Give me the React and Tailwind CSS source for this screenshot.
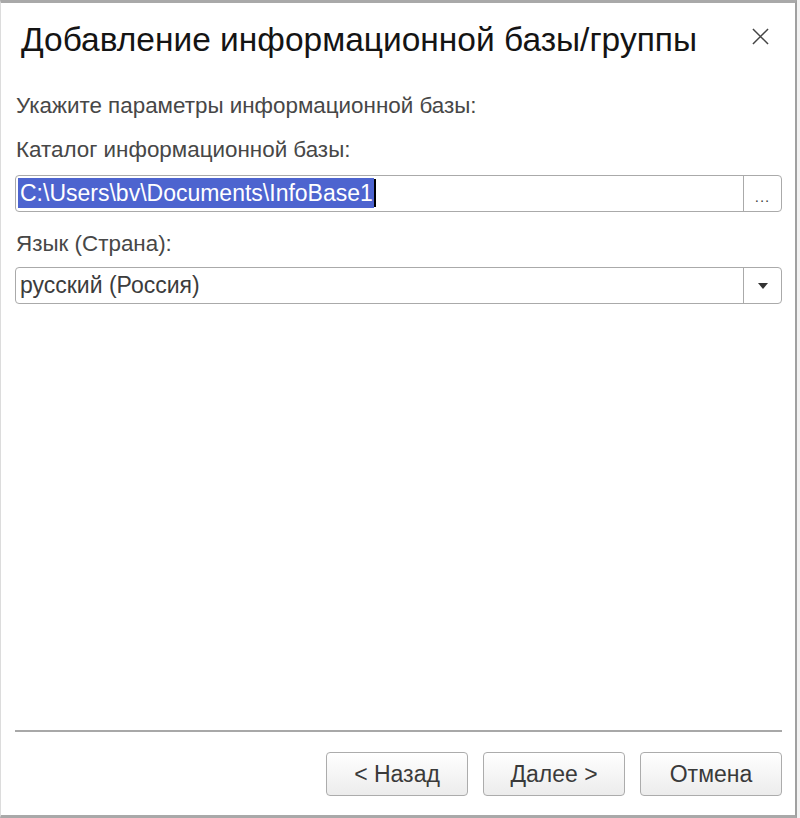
import React from 'react';

const Field = ({ children, button }) => (
  <div className="flex h-[37px] w-full rounded-[4px] border border-[#aaaaaa] bg-white">
    <div className="flex flex-1 items-center pl-[2px] overflow-hidden">{children}</div>
    <div className="flex w-[38px] items-center justify-center border-l border-[#aaaaaa]">{button}</div>
  </div>
);

const Btn = ({ label }) => (
  <button
    type="button"
    className="h-[44px] w-[142px] rounded-[4px] border border-[#acacac] bg-gradient-to-b from-white to-[#ececec] text-[23px] text-[#3a3a3a]"
  >
    {label}
  </button>
);

const App = () => {
  return (
    <div
      className="flex h-[818px] w-[800px] bg-[#f2f2f2]"
      style={{ fontFamily: '"Liberation Sans", Arial, sans-serif' }}
    >
      <div className="flex h-full w-[797px] flex-col border-t-[3px] border-b-[3px] border-r-2 border-l border-t-[#a9a9a9] border-b-[#a9a9a9] border-r-[#a0a0a0] border-l-[#dcdcdc] bg-white pl-[14px] pr-[13px]">
        <div className="flex h-[75px] items-center justify-between pl-[6px] pr-[13px] pb-[2px]">
          <h1 className="text-[33.5px] leading-none text-[#141414]">Добавление информационной базы/группы</h1>
          <svg width="17" height="17" viewBox="0 0 18 18" className="mb-[6px] text-[#444]">
            <path d="M1 1 L17 17 M17 1 L1 17" stroke="currentColor" strokeWidth="1.6" />
          </svg>
        </div>

        <div className="pl-[1px] pt-[17px] text-[22.4px] leading-none text-[#474747]">
          Укажите параметры информационной базы:
        </div>
        <div className="pl-[1px] pt-[22px] pb-[13px] text-[22.4px] leading-none text-[#474747]">
          Каталог информационной базы:
        </div>
        <Field button={<span className="pt-[6px] text-[15px] leading-none tracking-[1px] text-[#444]">...</span>}>
          <span className="flex h-[30px] items-center bg-[#4d64cf] pl-[2px] pr-[1px] text-[23px] text-white">
            C:\Users\bv\Documents\InfoBase1
          </span>
          <span className="h-[28px] w-[2px] bg-black" />
        </Field>
        <div className="pl-[1px] pt-[21px] pb-[12px] text-[22.4px] leading-none text-[#474747]">
          Язык (Страна):
        </div>
        <Field
          button={
            <svg width="10" height="6" viewBox="0 0 10 6">
              <path d="M0 0 L10 0 L5 6 Z" fill="#333" />
            </svg>
          }
        >
          <span className="pl-[2px] text-[23px] text-[#3c3c3c]">русский (Россия)</span>
        </Field>

        <div className="flex-1" />

        <div className="h-[2px] bg-[#a8a8a8]" />
        <div className="flex justify-end gap-[15px] pt-[20px] pb-[19px]">
          <Btn label="< Назад" />
          <Btn label="Далее >" />
          <Btn label="Отмена" />
        </div>
      </div>
      <div className="flex-1" />
    </div>
  );
};

export default App;
